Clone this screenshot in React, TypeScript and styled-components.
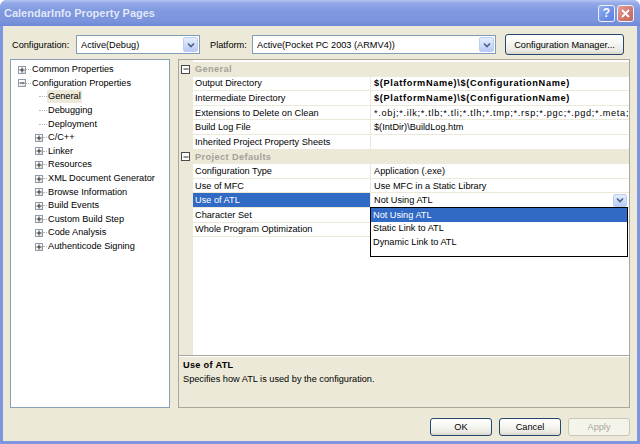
import React from 'react';
import styled, { createGlobalStyle } from 'styled-components';

const GlobalStyle = createGlobalStyle`
  html, body { margin: 0; padding: 0; }
  body {
    width: 640px; height: 444px; overflow: hidden;
    font-family: "Liberation Sans", Arial, sans-serif;
    font-size: 9.2px; color: #000;
  }
  #root { width: 640px; height: 444px; }
  * { box-sizing: border-box; }
`;

const Window = styled.div`
  width: 640px; height: 444px;
  display: flex; flex-direction: column;
  background: #7d96df;
  border-radius: 7px 7px 0 0;
  overflow: hidden;
`;

const TitleBar = styled.div`
  height: 26px; flex: none;
  display: flex; align-items: center;
  padding: 0 6px 0 4px;
  background: linear-gradient(to bottom, #b4c4f2 0%, #94aae9 12%, #809ae1 40%, #7b94dd 80%, #7089d6 100%);
`;

const TitleText = styled.div`
  flex: 1;
  font-weight: bold; font-size: 11px;
  color: #e3e9fa;
  text-shadow: 0 0 1px rgba(80,100,170,0.3);
`;

const CaptionButton = styled.div<{ $kind: 'help' | 'close' }>`
  width: 17px; height: 17px;
  margin-left: 2px;
  border: 1px solid #eef2fc;
  border-radius: 3px;
  display: flex; align-items: center; justify-content: center;
  color: #fff; font-weight: bold; font-size: 12px;
  background: ${p => p.$kind === 'close'
    ? 'linear-gradient(135deg, #e3a098 0%, #cf776e 60%, #c2665e 100%)'
    : 'linear-gradient(135deg, #92aef0 0%, #6d8ee6 60%, #5c7fde 100%)'};
`;

const Body = styled.div`
  flex: 1;
  margin: 0 3px 3px 3px;
  background: #ece9d8;
  display: flex; flex-direction: column;
`;

const ConfigRow = styled.div`
  height: 21px; margin-top: 8px;
  padding-left: 7px;
  display: flex; align-items: center;
`;

const FieldLabel = styled.div<{ $width: number; $gap?: number }>`
  width: ${p => p.$width}px;
  margin-left: ${p => p.$gap ?? 0}px;
  padding-left: 2px;
  flex: none;
`;

const Combo = styled.div<{ $width: number }>`
  width: ${p => p.$width}px; height: 19px; flex: none;
  background: #fff;
  border: 1px solid #7f9db9;
  display: flex; align-items: center;
  padding: 1px;
`;

const ComboText = styled.div`
  flex: 1; padding-left: 3px;
  white-space: nowrap; overflow: hidden;
`;

const ArrowBox = styled.div<{ $w: number; $h: number }>`
  width: ${p => p.$w}px; height: ${p => p.$h}px; flex: none;
  border: 1px solid #bccdf4;
  border-radius: 2px;
  background: linear-gradient(to bottom, #e6eefc 0%, #cddbfa 55%, #b9cbf5 100%);
  display: flex; align-items: center; justify-content: center;
`;

const PushButton = styled.div<{ $width: number; $height: number; $disabled?: boolean; $gap?: number }>`
  width: ${p => p.$width}px; height: ${p => p.$height}px; flex: none;
  margin-left: ${p => p.$gap ?? 0}px;
  border: 1px solid ${p => (p.$disabled ? '#c9c7ba' : '#26476e')};
  border-radius: 3px;
  background: ${p => (p.$disabled
    ? '#f5f4ea'
    : 'linear-gradient(to bottom, #ffffff 0%, #f6f6f2 45%, #e9e8e0 85%, #d8d5c8 100%)')};
  color: ${p => (p.$disabled ? '#aca899' : '#000')};
  display: flex; align-items: center; justify-content: center;
  white-space: nowrap;
`;

const Main = styled.div`
  height: 349px; margin-top: 4px;
  padding: 0 7px;
  display: flex; gap: 8px;
`;

const TreePanel = styled.div`
  width: 160px; flex: none;
  background: #fff;
  border: 1px solid #8a9fb8;
  padding-top: 3px;
`;

const TreeRow = styled.div<{ $indent: number }>`
  height: 13.6px;
  display: flex; align-items: center;
  padding-left: ${p => p.$indent}px;
  white-space: nowrap;
`;

const ExpandBox = styled.div<{ $size?: number; $dark?: boolean }>`
  width: ${p => p.$size ?? 8}px; height: ${p => p.$size ?? 8}px; flex: none;
  border: 1px solid ${p => (p.$dark ? '#4a4a4a' : '#8c9bae')};
  background: ${p => (p.$dark ? '#fff' : 'linear-gradient(135deg, #ffffff 30%, #dcdad0 100%)')};
  display: flex; align-items: center; justify-content: center;
`;

const TreeLine = styled.div<{ $w: number }>`
  width: ${p => p.$w}px; height: 0; flex: none;
  border-top: 1px dotted #b8b8b8;
`;

const TreeLabel = styled.div<{ $selected?: boolean }>`
  padding: 1px 1px;
  line-height: 11px;
  background: ${p => (p.$selected ? '#ece9d8' : 'transparent')};
`;

const RightPanel = styled.div`
  width: 452px; flex: none; min-width: 0;
  border: 1px solid #a9a79c;
  display: flex; flex-direction: column;
`;

const Grid = styled.div`
  height: 295px; flex: none;
  padding-top: 2px;
  background: linear-gradient(to right, #ece9d8 14px, #ffffff 14px);
`;

const GridRow = styled.div<{ $category?: boolean }>`
  height: 14.6px;
  display: flex;
  background: ${p => (p.$category ? '#ece9d8' : 'transparent')};
`;

const MarginCell = styled.div`
  width: 14px; flex: none;
  display: flex; align-items: center;
  padding-left: 2px;
`;

const CategoryText = styled.div`
  padding-left: 2px;
  display: flex; align-items: center;
  font-weight: bold; color: #a3a29a;
  letter-spacing: 0.4px;
`;

const NameCell = styled.div<{ $selected?: boolean }>`
  width: 178px; flex: none;
  border-right: 1px solid #ece9d8;
  border-bottom: 1px solid #ece9d8;
  padding-left: 2px;
  display: flex; align-items: center;
  white-space: nowrap; overflow: hidden;
  background: ${p => (p.$selected ? '#316ac5' : 'transparent')};
  color: ${p => (p.$selected ? '#fff' : '#000')};
`;

const ValueCell = styled.div`
  flex: 1; min-width: 0;
  position: relative;
  border-bottom: 1px solid #ece9d8;
  padding-left: 3px;
  display: flex; align-items: center;
`;

const ValueText = styled.div<{ $bold?: boolean; $spread?: number }>`
  flex: 1; min-width: 0;
  white-space: nowrap; overflow: hidden;
  font-weight: ${p => (p.$bold ? 'bold' : 'normal')};
  letter-spacing: ${p => p.$spread ?? 0}px;
`;

const CellArrow = styled(ArrowBox)`
  margin-right: 2px;
`;

const DropList = styled.div`
  position: absolute;
  top: 100%; left: -1px; right: 1px;
  height: 50px;
  background: #fff;
  border: 1px solid #000;
  z-index: 2;
`;

const DropItem = styled.div<{ $selected?: boolean }>`
  height: 13.6px;
  padding-left: 2px;
  display: flex; align-items: center;
  white-space: nowrap;
  background: ${p => (p.$selected ? '#316ac5' : 'transparent')};
  color: ${p => (p.$selected ? '#fff' : '#000')};
`;

const Description = styled.div`
  flex: 1;
  border-top: 1px solid #a9a79c;
  box-shadow: inset 0 1px 0 #ffffff;
  background: #ece9d8;
  padding: 2px 5px 0 4px;
  line-height: 14px;
`;

const DescTitle = styled.div`
  font-weight: bold;
  letter-spacing: 0.3px;
`;

const ButtonRow = styled.div`
  height: 18px; margin-top: 10px;
  padding-right: 7px;
  display: flex; justify-content: flex-end; gap: 7px;
`;

const Chevron = () => (
  <svg width="8" height="6" viewBox="0 0 8 6">
    <path d="M1 1.5 L4 4.5 L7 1.5" fill="none" stroke="#4d6185" strokeWidth="1.6" />
  </svg>
);

const Sign = ({ plus }: { plus: boolean }) => (
  <svg width="6" height="6" viewBox="0 0 6 6">
    <path d={plus ? 'M0.5 3 H5.5 M3 0.5 V5.5' : 'M0.5 3 H5.5'} stroke="#2a2a2a" strokeWidth="1" fill="none" />
  </svg>
);

type TreeItem = { label: string; level: 0 | 1; box?: 'plus' | 'minus'; selected?: boolean };

const tree: TreeItem[] = [
  { label: 'Common Properties', level: 0, box: 'plus' },
  { label: 'Configuration Properties', level: 0, box: 'minus' },
  { label: 'General', level: 1, selected: true },
  { label: 'Debugging', level: 1 },
  { label: 'Deployment', level: 1 },
  { label: 'C/C++', level: 1, box: 'plus' },
  { label: 'Linker', level: 1, box: 'plus' },
  { label: 'Resources', level: 1, box: 'plus' },
  { label: 'XML Document Generator', level: 1, box: 'plus' },
  { label: 'Browse Information', level: 1, box: 'plus' },
  { label: 'Build Events', level: 1, box: 'plus' },
  { label: 'Custom Build Step', level: 1, box: 'plus' },
  { label: 'Code Analysis', level: 1, box: 'plus' },
  { label: 'Authenticode Signing', level: 1, box: 'plus' },
];

type Prop = { name: string; value: string; bold?: boolean; spread?: number; selected?: boolean };
type Section = { title: string; props: Prop[] };

const sections: Section[] = [
  {
    title: 'General',
    props: [
      { name: 'Output Directory', value: '$(PlatformName)\\$(ConfigurationName)', bold: true, spread: 0.65 },
      { name: 'Intermediate Directory', value: '$(PlatformName)\\$(ConfigurationName)', bold: true, spread: 0.65 },
      { name: 'Extensions to Delete on Clean', value: '*.obj;*.ilk;*.tlb;*.tli;*.tlh;*.tmp;*.rsp;*.pgc;*.pgd;*.meta;$(TargetPath)', spread: 0.7 },
      { name: 'Build Log File', value: '$(IntDir)\\BuildLog.htm' },
      { name: 'Inherited Project Property Sheets', value: '' },
    ],
  },
  {
    title: 'Project Defaults',
    props: [
      { name: 'Configuration Type', value: 'Application (.exe)' },
      { name: 'Use of MFC', value: 'Use MFC in a Static Library' },
      { name: 'Use of ATL', value: 'Not Using ATL', selected: true },
      { name: 'Character Set', value: '' },
      { name: 'Whole Program Optimization', value: '' },
    ],
  },
];

const atlOptions = ['Not Using ATL', 'Static Link to ATL', 'Dynamic Link to ATL'];

export default function App() {
  return (
    <>
      <GlobalStyle />
      <Window>
        <TitleBar>
          <TitleText>CalendarInfo Property Pages</TitleText>
          <CaptionButton $kind="help">?</CaptionButton>
          <CaptionButton $kind="close">
            <svg width="9" height="9" viewBox="0 0 9 9">
              <path d="M1 1 L8 8 M8 1 L1 8" stroke="#fff" strokeWidth="1.8" />
            </svg>
          </CaptionButton>
        </TitleBar>
        <Body>
          <ConfigRow>
            <FieldLabel $width={66}>Configuration:</FieldLabel>
            <Combo $width={124}>
              <ComboText>Active(Debug)</ComboText>
              <ArrowBox $w={15} $h={15}><Chevron /></ArrowBox>
            </Combo>
            <FieldLabel $width={44} $gap={8}>Platform:</FieldLabel>
            <Combo $width={244}>
              <ComboText>Active(Pocket PC 2003 (ARMV4))</ComboText>
              <ArrowBox $w={15} $h={15}><Chevron /></ArrowBox>
            </Combo>
            <PushButton $width={119} $height={21} $gap={9}>Configuration Manager...</PushButton>
          </ConfigRow>
          <Main>
            <TreePanel>
              {tree.map(item => {
                const indent = item.level === 0 ? 7 : item.box ? 24 : 28;
                return (
                  <TreeRow key={item.label} $indent={indent}>
                    {item.box && (
                      <ExpandBox><Sign plus={item.box === 'plus'} /></ExpandBox>
                    )}
                    <TreeLine $w={item.level === 0 ? 5 : item.box ? 4 : 8} />
                    <TreeLabel $selected={item.selected}>{item.label}</TreeLabel>
                  </TreeRow>
                );
              })}
            </TreePanel>
            <RightPanel>
              <Grid>
                {sections.map(sec => (
                  <React.Fragment key={sec.title}>
                    <GridRow $category>
                      <MarginCell>
                        <ExpandBox $size={9} $dark><Sign plus={false} /></ExpandBox>
                      </MarginCell>
                      <CategoryText>{sec.title}</CategoryText>
                    </GridRow>
                    {sec.props.map(p => (
                      <GridRow key={p.name}>
                        <MarginCell />
                        <NameCell $selected={p.selected}>{p.name}</NameCell>
                        <ValueCell>
                          <ValueText $bold={p.bold} $spread={p.spread}>{p.value}</ValueText>
                          {p.selected && (
                            <>
                              <CellArrow $w={14} $h={13}><Chevron /></CellArrow>
                              <DropList>
                                {atlOptions.map((o, i) => (
                                  <DropItem key={o} $selected={i === 0}>{o}</DropItem>
                                ))}
                              </DropList>
                            </>
                          )}
                        </ValueCell>
                      </GridRow>
                    ))}
                  </React.Fragment>
                ))}
              </Grid>
              <Description>
                <DescTitle>Use of ATL</DescTitle>
                <div>Specifies how ATL is used by the configuration.</div>
              </Description>
            </RightPanel>
          </Main>
          <ButtonRow>
            <PushButton $width={62} $height={18}>OK</PushButton>
            <PushButton $width={62} $height={18}>Cancel</PushButton>
            <PushButton $width={62} $height={18} $disabled>Apply</PushButton>
          </ButtonRow>
        </Body>
      </Window>
    </>
  );
}
